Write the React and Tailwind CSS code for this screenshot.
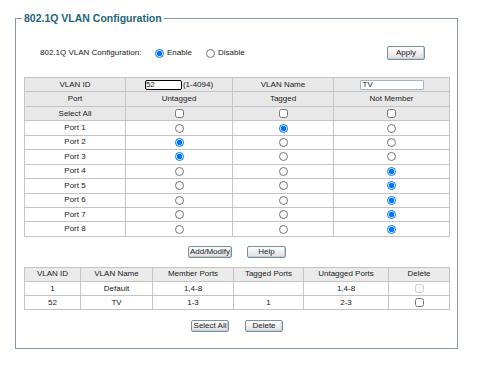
import React from 'react';

const cell = "border-r border-b border-[#c4c4c4] flex items-center justify-center";
const btn = "border border-[#7c8fa3] rounded-[2px] bg-linear-to-b from-white to-[#dedede] text-[8px] leading-none text-[#222] flex items-center justify-center shadow-[inset_-1px_-1px_0_#c2cdd8]";

function Radio({ checked, name }) {
  return <input type="radio" name={name} defaultChecked={checked} className="w-[9px] h-[9px] m-0" />;
}
function Check({ disabled }) {
  return <input type="checkbox" disabled={disabled} className="w-[9px] h-[9px] m-0" />;
}

export default function App() {
  const ports = [
    ['Port 1', 't'], ['Port 2', 'u'], ['Port 3', 'u'], ['Port 4', 'n'],
    ['Port 5', 'n'], ['Port 6', 'n'], ['Port 7', 'n'], ['Port 8', 'n'],
  ];
  const row1 = "grid grid-cols-[101px_107px_101px_116px] h-[14.45px]";
  const row2 = "grid grid-cols-[56px_72px_81px_70px_85px_61px] h-[14.2px]";
  return (
    <div className="w-[500px] h-[391px] bg-white pt-[18px] pl-[15px] font-['Liberation_Sans',Arial,sans-serif] text-[#222]">
      <div className="relative w-[443px] h-[331px] border border-[#8a98a3]">
        <span className="absolute -top-[8px] left-[6px] bg-white px-[2px] text-[10.5px] leading-[14px] font-bold text-[#256577]">
          802.1Q VLAN Configuration
        </span>

        <div className="mt-[27px] ml-[24px] flex items-center h-[14px] text-[8px]">
          <span className="w-[115px]">802.1Q VLAN Configuration:</span>
          <label className="w-[51px] flex items-center">
            <Radio name="en" checked />
            <span className="ml-[3px]">Enable</span>
          </label>
          <label className="w-[181px] flex items-center">
            <Radio name="en" />
            <span className="ml-[3px]">Disable</span>
          </label>
          <button className={`${btn} w-[38px] h-[14px]`}>Apply</button>
        </div>

        <div className="mt-[17px] ml-[8px] w-[426px] border-l border-t border-[#c4c4c4] text-[8px]">
          <div className={`${row1} bg-[#e8e8e8]`}>
            <div className={cell}>VLAN ID</div>
            <div className={cell}>
              <div className="w-[37px] h-[10px] border-[1.5px] border-black rounded-[2px] bg-white flex items-center leading-none">52</div>
              <span className="ml-[1px]">(1-4094)</span>
            </div>
            <div className={cell}>VLAN Name</div>
            <div className={cell}>
              <div className="w-[64px] h-[10px] border border-[#a5b4c4] rounded-[1px] bg-white flex items-center pl-[2px] leading-none">TV</div>
            </div>
          </div>
          <div className={`${row1} bg-[#e8e8e8]`}>
            <div className={cell}>Port</div>
            <div className={cell}>Untagged</div>
            <div className={cell}>Tagged</div>
            <div className={cell}>Not Member</div>
          </div>
          <div className={`${row1} bg-[#e8e8e8]`}>
            <div className={cell}>Select All</div>
            <div className={cell}><Check /></div>
            <div className={cell}><Check /></div>
            <div className={cell}><Check /></div>
          </div>
          {ports.map(([p, s], i) => (
            <div key={p} className={`${row1} bg-white`}>
              <div className={cell}>{p}</div>
              <div className={cell}><Radio name={`p${i}`} checked={s === 'u'} /></div>
              <div className={cell}><Radio name={`p${i}`} checked={s === 't'} /></div>
              <div className={cell}><Radio name={`p${i}`} checked={s === 'n'} /></div>
            </div>
          ))}
        </div>

        <div className="mt-[9px] ml-[8px] w-[426px] flex justify-center gap-[15px]">
          <button className={`${btn} w-[44px] h-[12px]`}>Add/Modify</button>
          <button className={`${btn} w-[39px] h-[12px]`}>Help</button>
        </div>

        <div className="mt-[9px] ml-[8px] w-[426px] border-l border-t border-[#c4c4c4] text-[8px]">
          <div className={`${row2} bg-[#ebebeb]`}>
            <div className={cell}>VLAN ID</div>
            <div className={cell}>VLAN Name</div>
            <div className={cell}>Member Ports</div>
            <div className={cell}>Tagged Ports</div>
            <div className={cell}>Untagged Ports</div>
            <div className={cell}>Delete</div>
          </div>
          <div className={`${row2} bg-white`}>
            <div className={cell}>1</div>
            <div className={cell}>Default</div>
            <div className={cell}>1,4-8</div>
            <div className={cell}></div>
            <div className={cell}>1,4-8</div>
            <div className={cell}><Check disabled /></div>
          </div>
          <div className={`${row2} bg-white`}>
            <div className={cell}>52</div>
            <div className={cell}>TV</div>
            <div className={cell}>1-3</div>
            <div className={cell}>1</div>
            <div className={cell}>2-3</div>
            <div className={cell}><Check /></div>
          </div>
        </div>

        <div className="mt-[10px] ml-[8px] w-[426px] flex justify-center gap-[16px]">
          <button className={`${btn} w-[38px] h-[12px]`}>Select All</button>
          <button className={`${btn} w-[38px] h-[12px]`}>Delete</button>
        </div>
      </div>
    </div>
  );
}
